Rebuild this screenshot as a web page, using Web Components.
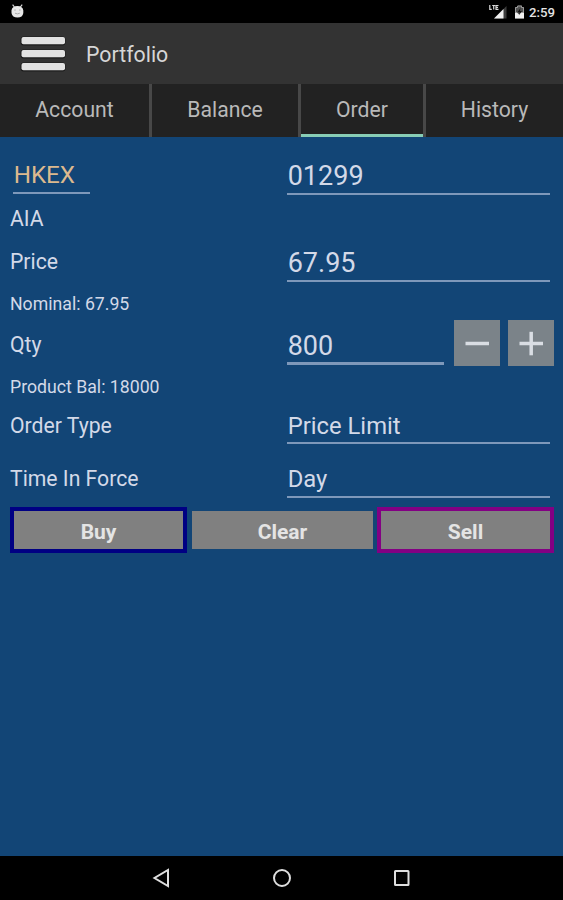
<!DOCTYPE html>
<html lang="en">
<head>
<meta charset="utf-8">
<title>Portfolio</title>
<style>
  body {
    margin: 0;
    font-family: Roboto, sans-serif;
    background: #124576;
  }
</style>
</head>
<body>
<order-screen></order-screen>

<script>
// Base class: puts the static template of each element in its shadow root
class BaseElement extends HTMLElement {
    constructor() {
        super();
        this.attachShadow({ mode: 'open' });
        this.shadowRoot.innerHTML = this.template();
    }
}

class StatusBar extends BaseElement {
    template() {
        return `
      <style>
        :host {
          display: flex;
          justify-content: space-between;
          height: 23px;
          background: #000;
          color: #e4e4e4;
        }
        svg { display: block; }
        .right { display: flex; padding-right: 8px; }
        span { font-size: 13.2px; font-weight: 500; line-height: 25px; }
      </style>
      <svg width="34" height="23">
        <path d="M12.6 4.6l1.8 2.4M22.2 4.6L20.4 7" stroke="#d8d8d8" stroke-width="1.2"/>
        <path d="M11.5 10.500Q12 6 17.4 6T23.300 10.500V13q-.6 4.6-5.800 4.6T11.500 13z" fill="#e6e6e6"/>
        <path d="M14.2 10h1.6M19 10h1.6M15 13.2q2.4 1.4 4.8 0" stroke="#aaa" fill="none"/>
      </svg>
      <div class="right">
        <svg width="40" height="23">
          <path d="M17.5 6v12.5H5z" fill="#3c3c3c"/>
          <path d="M14.5 9v9.500H5z" fill="#f0f0f0"/>
          <path d="M.8 5v4.300h2M3.200 5.500h3M4.700 5.500v4M9.500 5.500H7v3.800h2.500M7 7.400h2" stroke="#d8d8d8" stroke-width="1.200" fill="none"/>
          <path d="M27 7h2V5.500h4V7h2v11.500h-9V7z" fill="#505050"/>
          <path d="M26 12.500h2l2 2 2-2h3v6h-9z" fill="#f2f2f2"/>
          <path d="M26.500 12V7.500h2V6h4v1.500h2V12" stroke="#999" fill="none"/>
          <path d="M31.500 8l-3 4.200h2.200l-.8 3 3-4.200h-2z" fill="#111"/>
        </svg>
        <span>2:59</span>
      </div>`;
    }
}

class AppHeader extends BaseElement {
    template() {
        return `
      <style>
        :host {
          display: flex;
          gap: 20px;
          height: 61px;
          padding-left: 20px;
          background: #333;
          color: #d6d6d6;
          font-size: 21.3px;
          line-height: 63px;
        }
      </style>
      <svg width="46" height="61">
        <g fill="#1c1c1c">
          <rect x="0.500" y="13.500" width="45" height="9" rx="3"/>
          <rect x="0.500" y="26.500" width="45" height="9" rx="3"/>
          <rect x="0.500" y="39.500" width="45" height="9" rx="3"/>
        </g>
        <g fill="#e2e2e2">
          <rect x="1.500" y="14" width="43.500" height="7.300" rx="2"/>
          <rect x="1.500" y="27" width="43.500" height="7.300" rx="2"/>
          <rect x="1.500" y="40" width="43.500" height="7.300" rx="2"/>
        </g>
      </svg>
      <span><slot></slot></span>`;
    }
}

class TabBar extends BaseElement {
    template() {
        return `
      <style>
        :host {
          display: grid;
          grid-template-columns: 149px 146px 122px 137px;
          grid-template-rows: 53px;
          gap: 3px;
          height: 53px;
          background: #484848;
        }
      </style>
      <slot></slot>`;
    }
}

class TabItem extends BaseElement {
    template() {
        return `
      <style>
        :host {
          display: block;
          box-sizing: border-box;
          background: #222;
          color: #b9b9b9;
          font-size: 21.2px;
          line-height: 52px;
          text-align: center;
        }
        :host([active]) { border-bottom: 3px solid #88cdb5; }
      </style>
      <slot></slot>`;
    }
}

// One line of the form: label on the left, field on the right
class FormRow extends BaseElement {
    template() {
        return `
      <style>
        :host {
          display: grid;
          grid-template-columns: 277px 1fr;
          grid-template-rows: var(--h);
          height: var(--h);
          line-height: var(--h);
          color: #d3d9e8;
          font-size: 21.2px;
          white-space: nowrap;
        }
        :host([small]) {
          font-size: 17.7px;
          line-height: calc(var(--h) + 2px);
        }
        .field { display: flex; }
      </style>
      <div><slot name="label"></slot></div>
      <div class="field"><slot></slot></div>`;
    }
}

class TextField extends BaseElement {
    template() {
        return `
      <style>
        :host {
          display: block;
          box-sizing: border-box;
          width: var(--w, 263px);
          height: 100%;
          padding-left: 0.7px;
          box-shadow: inset 0 calc(-1 * var(--line, 2px)) #7e98ba;
        }
      </style>
      <slot></slot>`;
    }
}

class StepButton extends BaseElement {
    static get observedAttributes() {
        return ['kind'];
    }

    attributeChangedCallback(name, oldValue, newValue) {
        const vertical = this.shadowRoot.querySelector('.vertical');
        vertical.style.display = newValue === 'plus' ? '' : 'none';
    }

    template() {
        return `
      <style>
        :host {
          display: block;
          width: 46px;
          height: 46px;
          background: #7b8389;
        }
        svg { display: block; }
      </style>
      <svg width="46" height="46" stroke="#d9dde3" stroke-width="3.500">
        <path d="M11.500 23.500h23.500"/>
        <path class="vertical" d="M23.200 11.800v23.500"/>
      </svg>`;
    }
}

class ActionButton extends BaseElement {
    template() {
        return `
      <style>
        :host {
          display: block;
          box-sizing: border-box;
          height: 46px;
          border: 4px solid var(--edge, transparent);
          background: #808080;
          background-clip: padding-box;
          color: #e4e4e4;
          font-size: 21px;
          font-weight: 700;
          line-height: 42px;
          text-align: center;
        }
      </style>
      <slot></slot>`;
    }
}

class NavBar extends BaseElement {
    template() {
        return `
      <style>
        :host {
          display: grid;
          grid-template-columns: repeat(3, 120px);
          justify-content: center;
          justify-items: center;
          height: 44px;
          background: #000;
        }
        svg { fill: none; stroke: #dedede; stroke-width: 2; }
      </style>
      <svg width="24" height="44"><path d="M18 14v16L4.500 22z"/></svg>
      <svg width="24" height="44"><circle cx="12" cy="22" r="8"/></svg>
      <svg width="24" height="44"><rect x="5" y="15" width="13.500" height="14" rx=".5"/></svg>`;
    }
}

class OrderScreen extends BaseElement {
    template() {
        return `
      <style>
        :host {
          display: flex;
          flex-direction: column;
          width: 563px;
          height: 900px;
          overflow: hidden;
        }
        main { flex: 1; padding: 19px 9px 0 10px; }
        .market {
          --w: 77px;
          height: 38px;
          margin-left: 3px;
          color: #dcb98e;
          font-size: 24.2px;
          line-height: 38px;
        }
        .number { padding-top: 1px; font-size: 27px; }
        .choice { font-size: 23.8px; }
        .qty { --w: 157px; --line: 3px; }
        .minus { margin: -5px 8px 0 10px; }
        .plus { margin-top: -5px; }
        .force { margin-top: 16px; }
        .actions {
          display: grid;
          grid-template-columns: 177px 189px 177px;
          justify-content: end;
          margin-top: 9px;
        }
        .buy { --edge: #000083; margin: 0 1px 0 -1px; }
        .sell { --edge: #830083; }
      </style>
      <status-bar></status-bar>
      <app-header>Portfolio</app-header>
      <tab-bar>
        <tab-item>Account</tab-item>
        <tab-item>Balance</tab-item>
        <tab-item active>Order</tab-item>
        <tab-item>History</tab-item>
      </tab-bar>
      <main>
        <form-row style="--h: 39px">
          <text-field slot="label" class="market">HKEX</text-field>
          <text-field class="number">01299</text-field>
        </form-row>
        <form-row style="--h: 47px"><span slot="label">AIA</span></form-row>
        <form-row style="--h: 40px">
          <span slot="label">Price</span>
          <text-field class="number">67.95</text-field>
        </form-row>
        <form-row small style="--h: 43px"><span slot="label">Nominal: 67.95</span></form-row>
        <form-row style="--h: 40px">
          <span slot="label">Qty</span>
          <text-field class="number qty">800</text-field>
          <step-button class="minus" kind="minus"></step-button>
          <step-button class="plus" kind="plus"></step-button>
        </form-row>
        <form-row small style="--h: 43px"><span slot="label">Product Bal: 18000</span></form-row>
        <form-row style="--h: 36px">
          <span slot="label">Order Type</span>
          <text-field class="choice">Price Limit</text-field>
        </form-row>
        <form-row class="force" style="--h: 38px">
          <span slot="label">Time In Force</span>
          <text-field class="choice">Day</text-field>
        </form-row>
        <div class="actions">
          <action-button class="buy">Buy</action-button>
          <action-button>Clear</action-button>
          <action-button class="sell">Sell</action-button>
        </div>
      </main>
      <nav-bar></nav-bar>`;
    }
}

customElements.define('status-bar', StatusBar);
customElements.define('app-header', AppHeader);
customElements.define('tab-bar', TabBar);
customElements.define('tab-item', TabItem);
customElements.define('form-row', FormRow);
customElements.define('text-field', TextField);
customElements.define('step-button', StepButton);
customElements.define('action-button', ActionButton);
customElements.define('nav-bar', NavBar);
customElements.define('order-screen', OrderScreen);
</script>
</body>
</html>
